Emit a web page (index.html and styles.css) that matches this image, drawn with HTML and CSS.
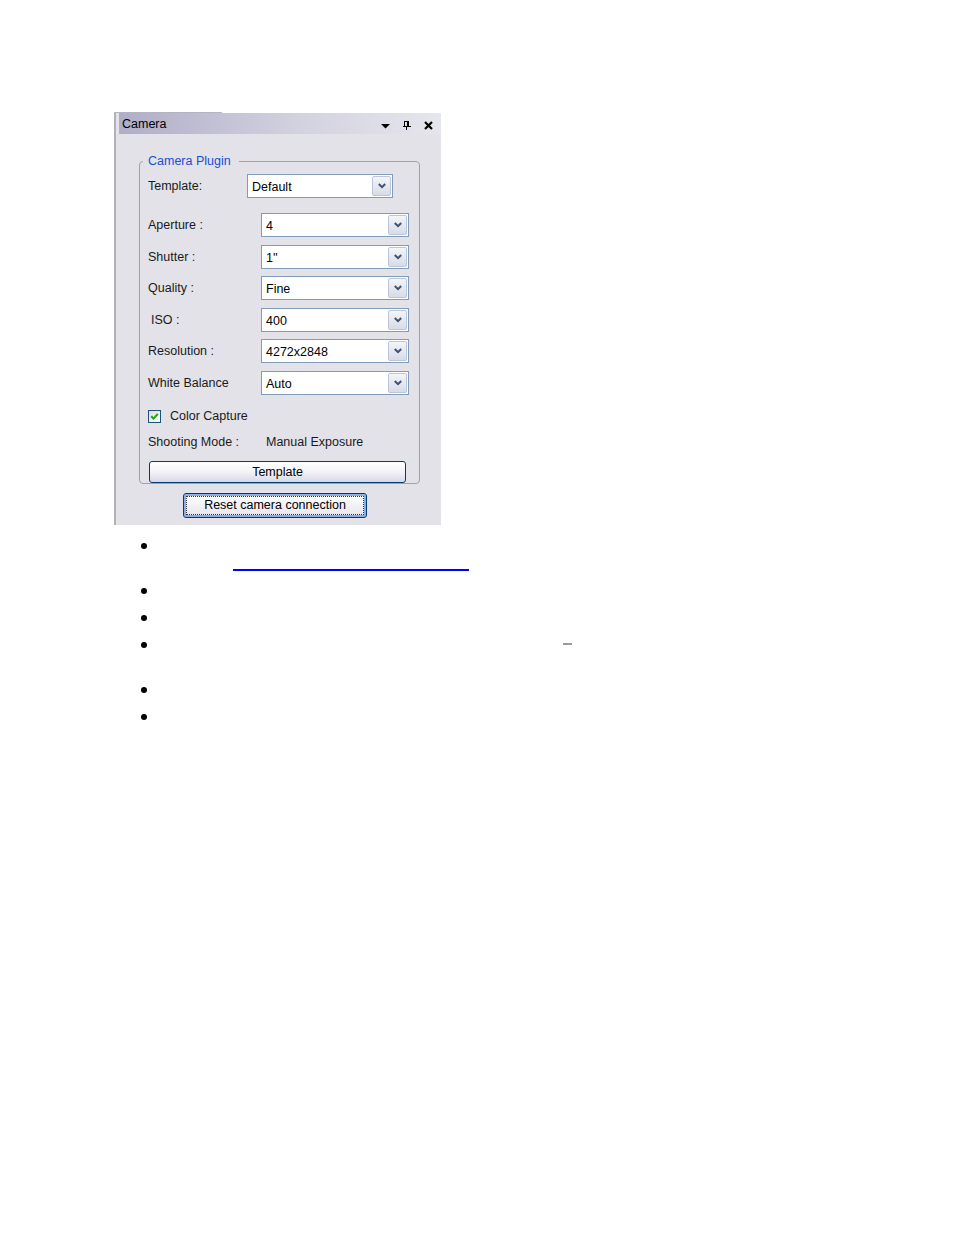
FILE: index.html
```html
<!DOCTYPE html>
<html>
<head>
<meta charset="utf-8">
<title>Camera</title>
<link rel="stylesheet" href="styles.css">
</head>
<body>
<div class="tabline"></div>
<div class="panel">
  <div class="titlebar">
    <span class="title">Camera</span>
    <div class="title-icons">
      <svg class="ico ico-drop" width="9" height="5" viewBox="0 0 9 5"><polygon points="0,0 9,0 4.5,4.5" fill="#000"/></svg>
      <svg class="ico ico-pin" width="8" height="9" viewBox="0 0 8 9" shape-rendering="crispEdges" fill="#000">
        <rect x="1" y="0" width="5" height="1"/>
        <rect x="1" y="0" width="1" height="5"/>
        <rect x="4" y="0" width="2" height="5"/>
        <rect x="0" y="5" width="8" height="1"/>
        <rect x="3" y="6" width="1" height="3"/>
      </svg>
      <svg class="ico ico-close" width="9" height="9" viewBox="0 0 9 9"><path d="M1 1 L8 8 M8 1 L1 8" stroke="#000" stroke-width="2.2" fill="none"/></svg>
    </div>
  </div>
  <div class="panel-body">
    <fieldset class="group">
      <legend class="group-title">Camera Plugin</legend>
      <div class="row row-template">
        <span class="label">Template:</span>
        <div class="combo"><span class="value">Default</span><span class="drop"><svg width="8" height="6" viewBox="0 0 8 6"><polyline points="0.8,1 4,4.2 7.2,1" fill="none" stroke="#3f5176" stroke-width="2"/></svg></span></div>
      </div>
      <div class="rows">
        <div class="row">
          <span class="label">Aperture :</span>
          <div class="combo"><span class="value">4</span><span class="drop"><svg width="8" height="6" viewBox="0 0 8 6"><polyline points="0.8,1 4,4.2 7.2,1" fill="none" stroke="#3f5176" stroke-width="2"/></svg></span></div>
        </div>
        <div class="row">
          <span class="label">Shutter :</span>
          <div class="combo"><span class="value">1''</span><span class="drop"><svg width="8" height="6" viewBox="0 0 8 6"><polyline points="0.8,1 4,4.2 7.2,1" fill="none" stroke="#3f5176" stroke-width="2"/></svg></span></div>
        </div>
        <div class="row">
          <span class="label">Quality :</span>
          <div class="combo"><span class="value">Fine</span><span class="drop"><svg width="8" height="6" viewBox="0 0 8 6"><polyline points="0.8,1 4,4.2 7.2,1" fill="none" stroke="#3f5176" stroke-width="2"/></svg></span></div>
        </div>
        <div class="row">
          <span class="label label-iso">ISO :</span>
          <div class="combo"><span class="value">400</span><span class="drop"><svg width="8" height="6" viewBox="0 0 8 6"><polyline points="0.8,1 4,4.2 7.2,1" fill="none" stroke="#3f5176" stroke-width="2"/></svg></span></div>
        </div>
        <div class="row">
          <span class="label">Resolution :</span>
          <div class="combo"><span class="value">4272x2848</span><span class="drop"><svg width="8" height="6" viewBox="0 0 8 6"><polyline points="0.8,1 4,4.2 7.2,1" fill="none" stroke="#3f5176" stroke-width="2"/></svg></span></div>
        </div>
        <div class="row">
          <span class="label">White Balance</span>
          <div class="combo"><span class="value">Auto</span><span class="drop"><svg width="8" height="6" viewBox="0 0 8 6"><polyline points="0.8,1 4,4.2 7.2,1" fill="none" stroke="#3f5176" stroke-width="2"/></svg></span></div>
        </div>
      </div>
      <div class="check-row">
        <span class="checkbox"><svg width="9" height="9" viewBox="0 0 9 9"><polyline points="1.2,4.2 3.5,6.6 7.8,1.8" fill="none" stroke="#21a121" stroke-width="2"/></svg></span>
        <span class="label">Color Capture</span>
      </div>
      <div class="mode-row">
        <span class="label">Shooting Mode :</span>
        <span class="label">Manual Exposure</span>
      </div>
      <div class="btn btn-template">Template</div>
    </fieldset>
    <div class="btn btn-reset"><span class="focus">Reset camera connection</span></div>
  </div>
</div>
<ul class="bullets">
  <li><span class="dot"></span><div class="lines"><div class="line"></div><div class="line"><a class="link" href="#"></a></div></div></li>
  <li><span class="dot"></span><div class="lines"><div class="line"></div></div></li>
  <li><span class="dot"></span><div class="lines"><div class="line"></div></div></li>
  <li><span class="dot"></span><div class="lines"><div class="line"><span class="dash"></span></div><div class="line"></div></div></li>
  <li><span class="dot"></span><div class="lines"><div class="line"></div></div></li>
  <li><span class="dot"></span><div class="lines"><div class="line"></div></div></li>
</ul>
</body>
</html>
```
FILE: styles.css
```css
html, body {
  margin: 0;
  padding: 0;
  background: #ffffff;
}
body {
  font-family: "Liberation Sans", Arial, sans-serif;
  font-size: 12.5px;
  color: #1a1a1a;
}
.tabline {
  margin: 112px 0 0 114px;
  width: 108px;
  height: 1px;
  background: #b4b3c2;
}
.panel {
  margin-left: 114px;
  width: 322px;
  height: 412px;
  border-left: 2px solid #b2b1b8;
  padding-left: 3px;
  background: #e3e2e8;
}
.titlebar {
  height: 21px;
  display: flex;
  align-items: center;
  background: linear-gradient(to right, #b0adc8, #d2d1df 55%, #e6e6ee);
}
.title {
  padding: 1px 0 0 3px;
  line-height: 15px;
  color: #000;
}
.title-icons {
  margin-left: auto;
  align-self: stretch;
  display: flex;
  align-items: center;
  padding-top: 3px;
  padding-right: 8px;
}
.ico { display: block; }
.ico-drop { margin-top: 3px; margin-right: 13px; }
.ico-pin { margin-right: 13px; }
.panel-body {
  display: flex;
  flex-direction: column;
  align-items: flex-start;
}
.group {
  margin: 20px 0 0 20px;
  width: 281px;
  box-sizing: border-box;
  border: 1px solid #a3a396;
  border-radius: 4px;
  padding: 5px 0 0 8px;
  min-inline-size: 0;
}
.group-title {
  margin-left: -5px;
  padding: 0 8px 0 5px;
  line-height: 15px;
  color: #1450d2;
}
.label {
  line-height: 15px;
  padding-top: 1px;
  white-space: pre;
}
.label-iso { padding-left: 3px; }
.row {
  display: grid;
  grid-template-columns: 113px 148px;
  height: 24px;
  align-items: center;
}
.row-template {
  grid-template-columns: 99px 146px;
}
.rows {
  margin-top: 15px;
  display: flex;
  flex-direction: column;
  gap: 7.5px;
}
.combo {
  height: 24px;
  box-sizing: border-box;
  border: 1px solid #7f9db9;
  background: #fff;
  display: flex;
  align-items: stretch;
}
.value {
  flex: 1;
  padding: 1px 0 0 4px;
  line-height: 22px;
  color: #000;
}
.drop {
  width: 17px;
  margin: 1px;
  border: 1px solid #bcc5d9;
  border-radius: 2px;
  background: linear-gradient(#f4f5f9, #d8dbe7);
  display: flex;
  align-items: center;
  justify-content: center;
}
.drop svg { display: block; }
.check-row {
  margin-top: 14px;
  height: 15px;
  display: flex;
  align-items: center;
}
.checkbox {
  width: 13px;
  height: 13px;
  box-sizing: border-box;
  border: 1px solid #1c5180;
  background: linear-gradient(135deg, #dcdcd6, #ffffff);
  display: flex;
  align-items: center;
  justify-content: center;
  margin-right: 9px;
}
.checkbox svg { display: block; }
.mode-row {
  margin-top: 10px;
  height: 16px;
  display: grid;
  grid-template-columns: 118px auto;
  align-items: center;
}
.btn {
  box-sizing: border-box;
  border: 1px solid #003c74;
  border-radius: 3px;
  color: #000;
  display: flex;
  align-items: center;
  justify-content: center;
}
.btn-template {
  margin: 11px 0 0 1px;
  width: 257px;
  height: 22px;
  padding-top: 1px;
  background: linear-gradient(#ffffff, #f4f4f7 45%, #d9d9e6);
}
.btn-reset {
  margin: 9px 0 0 64px;
  width: 184px;
  height: 25px;
  padding: 1px;
  background: linear-gradient(#ffffff, #f2f2f5 50%, #e2e2ea);
  box-shadow: inset 0 0 0 2px #8aaee8;
  align-items: stretch;
  justify-content: stretch;
}
.focus {
  flex: 1;
  margin: 1px;
  padding-top: 1px;
  border: 1px dotted #333;
  display: flex;
  align-items: center;
  justify-content: center;
  line-height: 15px;
}
.bullets {
  list-style: none;
  margin: 12px 0 0 0;
  padding: 0;
}
.bullets li {
  display: flex;
  margin-bottom: 9px;
}
.dot {
  flex: none;
  width: 6px;
  height: 6px;
  border-radius: 50%;
  background: #000;
  margin: 6px 0 0 141px;
}
.lines {
  flex: 1;
}
.line {
  height: 18px;
  display: flex;
  align-items: flex-start;
}
.link {
  display: block;
  margin-left: 86px;
  width: 236px;
  height: 14px;
  border-bottom: 2px solid #0000ff;
}
.dash {
  display: block;
  margin: 7px 0 0 416px;
  width: 9px;
  height: 2px;
  background: #9a9a9a;
}
```
